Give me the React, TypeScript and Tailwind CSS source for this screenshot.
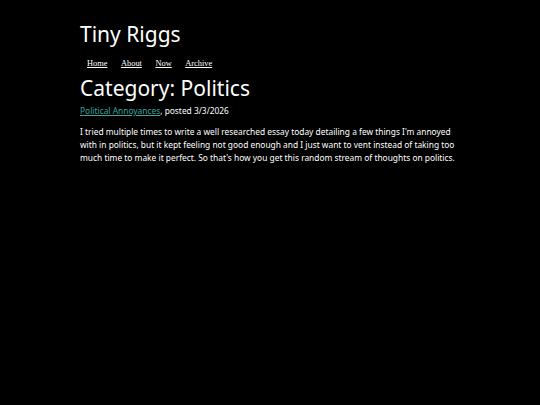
export default function App() {
  return (
    <div className="min-h-[405px] w-full bg-black text-white" style={{ fontFamily: '"Noto Sans", sans-serif' }}>
      <div className="mx-auto w-[380px] pt-[18px]">
        <h1 className="text-[21px] leading-[32px] font-normal">Tiny Riggs</h1>
        <nav className="mt-[8px] flex gap-[13.5px] pl-[7px] text-[8.4px] leading-[12px] font-['Liberation_Serif',serif]">
          <a href="#" className="text-white underline">Home</a>
          <a href="#" className="text-white underline">About</a>
          <a href="#" className="text-white underline">Now</a>
          <a href="#" className="text-white underline">Archive</a>
        </nav>
        <h2 className="mt-[2px] text-[21px] leading-[32px] font-normal">Category: Politics</h2>
        <p className="text-[8.4px] leading-[14px]">
          <a href="#" className="text-[#3aa59a] underline">Political Annoyances</a>, posted 3/3/2026
        </p>
        <p className="mt-[7px] text-[8.4px] leading-[13px]">
          I tried multiple times to write a well researched essay today detailing a few things I'm annoyed with in politics, but it kept feeling not good enough and I just want to vent instead of taking too much time to make it perfect. So that's how you get this random stream of thoughts on politics.
        </p>
      </div>
    </div>
  );
}
